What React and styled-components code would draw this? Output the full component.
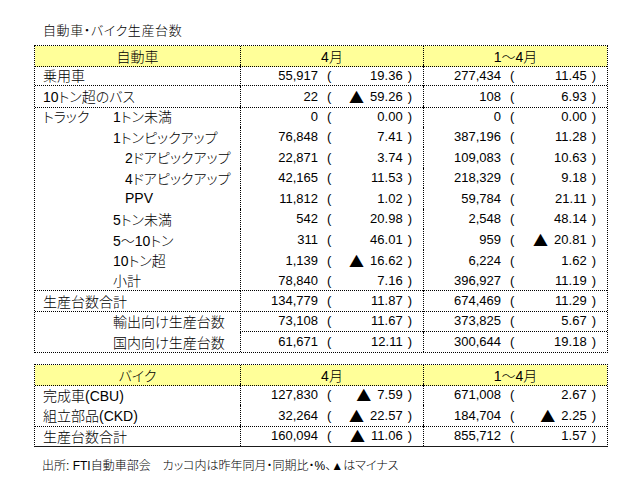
import React from "react";
import styled, { createGlobalStyle } from "styled-components";

const cars = [
  { label: "乗用車", m: ["55,917", "19.36"], y: ["277,434", "11.45"], line: "all" },
  { label: "10トン超のバス", m: ["22", "▲59.26"], y: ["108", "6.93"], line: "all" },
  { group: "トラック", label: "1トン未満", indent: 1, m: ["0", "0.00"], y: ["0", "0.00"] },
  { label: "1トンピックアップ", indent: 1, m: ["76,848", "7.41"], y: ["387,196", "11.28"] },
  { label: "2ドアピックアップ", indent: 2, m: ["22,871", "3.74"], y: ["109,083", "10.63"] },
  { label: "4ドアピックアップ", indent: 2, m: ["42,165", "11.53"], y: ["218,329", "9.18"] },
  { label: "PPV", indent: 2, m: ["11,812", "1.02"], y: ["59,784", "21.11"] },
  { label: "5トン未満", indent: 1, m: ["542", "20.98"], y: ["2,548", "48.14"] },
  { label: "5～10トン", indent: 1, m: ["311", "46.01"], y: ["959", "▲20.81"] },
  { label: "10トン超", indent: 1, m: ["1,139", "▲16.62"], y: ["6,224", "1.62"] },
  { label: "小計", indent: 1, m: ["78,840", "7.16"], y: ["396,927", "11.19"], line: "all" },
  { label: "生産台数合計", m: ["134,779", "11.87"], y: ["674,469", "11.29"], line: "all" },
  { label: "輸出向け生産台数", indent: 1, m: ["73,108", "11.67"], y: ["373,825", "5.67"], line: "data" },
  { label: "国内向け生産台数", indent: 1, m: ["61,671", "12.11"], y: ["300,644", "19.18"] },
];

const bikes = [
  { label: "完成車(CBU)", m: ["127,830", "▲7.59"], y: ["671,008", "2.67"] },
  { label: "組立部品(CKD)", m: ["32,264", "▲22.57"], y: ["184,704", "▲2.25"], line: "all" },
  { label: "生産台数合計", m: ["160,094", "▲11.06"], y: ["855,712", "1.57"] },
];

export default function App() {
  return (
    <>
      <GlobalStyle />
      <Page>
        <Title>自動車・バイク生産台数</Title>
        <StatTable rows={cars} heading="自動車" />
        <StatTable rows={bikes} heading="バイク" solidBottom />
        <Note>出所: FTI自動車部会　カッコ内は昨年同月・同期比・%、▲はマイナス</Note>
      </Page>
    </>
  );
}

function StatTable({ rows, heading, solidBottom }) {
  return (
    <Table $solidBottom={solidBottom}>
      <Row $head>
        <HeadCell>{heading}</HeadCell>
        <HeadCell $divider>4月</HeadCell>
        <HeadCell $divider>1～4月</HeadCell>
      </Row>
      {rows.map((r) => (
        <Row key={r.label + r.m[0]}>
          <LabelCell $line={r.line === "all"} $indent={r.indent || 0}>
            {r.group && <Group>{r.group}</Group>}
            {r.label}
          </LabelCell>
          <Figure values={r.m} line={!!r.line} />
          <Figure values={r.y} line={!!r.line} />
        </Row>
      ))}
    </Table>
  );
}

function Figure({ values, line }) {
  const minus = values[1].startsWith("▲");
  return (
    <DataCell $line={line}>
      <Count>{values[0]}</Count>
      <Paren $open>(</Paren>
      <Change>
        {minus && <Minus>▲</Minus>}
        {minus ? values[1].slice(1) : values[1]}
      </Change>
      <Paren>)</Paren>
    </DataCell>
  );
}

const GlobalStyle = createGlobalStyle`
  body {
    margin: 0;
    background: #ffffff;
    color: #000000;
    font-family: "Liberation Sans", "Noto Sans CJK JP", sans-serif;
    font-weight: 300;
    font-feature-settings: "palt";
  }
`;

const Page = styled.div`
  width: 642px;
  padding: 23px 0 0 34px;
  box-sizing: border-box;
`;

const Title = styled.div`
  height: 16px;
  line-height: 16px;
  padding-left: 9px;
  margin-bottom: 6px;
  font-size: 13px;
  letter-spacing: 0.6px;
`;

const Table = styled.div`
  width: 574px;
  box-sizing: border-box;
  border: 1px dotted #000000;
  border-bottom: ${(p) => (p.$solidBottom ? "1px solid #1a1a1a" : "1px dotted #000000")};
  margin-bottom: 11px;
`;

const Row = styled.div`
  display: grid;
  grid-template-columns: 205px 183px 184px;
  height: ${(p) => (p.$head ? 19 : 20.5)}px;
  font-size: 14px;
`;

const HeadCell = styled.div`
  background: #ffff99;
  border-bottom: 1px dotted #000000;
  border-left: ${(p) => (p.$divider ? "1px dotted #000000" : "none")};
  display: flex;
  align-items: center;
  justify-content: center;
  box-sizing: border-box;
`;

const LabelCell = styled.div`
  display: flex;
  align-items: center;
  padding-left: ${(p) => [8, 78, 90][p.$indent]}px;
  border-bottom: ${(p) => (p.$line ? "1px dotted #000000" : "none")};
  box-sizing: border-box;
  white-space: nowrap;
`;

const Group = styled.span`
  width: 70px;
  margin-left: -70px;
`;

const DataCell = styled.div`
  display: flex;
  align-items: center;
  padding-right: 11px;
  border-left: 1px dotted #000000;
  border-bottom: ${(p) => (p.$line ? "1px dotted #000000" : "none")};
  box-sizing: border-box;
  font-size: 13px;
  white-space: nowrap;
`;

const Count = styled.span`
  width: 77px;
  text-align: right;
`;

const Paren = styled.span`
  margin-left: ${(p) => (p.$open ? 9 : 5)}px;
`;

const Change = styled.span`
  flex: 1;
  display: flex;
  align-items: center;
  justify-content: flex-end;
`;

const Minus = styled.span`
  font-family: "Noto Sans CJK JP", sans-serif;
  font-size: 15px;
  margin-right: 6px;
`;

const Note = styled.div`
  padding-left: 8px;
  height: 16px;
  line-height: 16px;
  font-size: 12px;
`;
